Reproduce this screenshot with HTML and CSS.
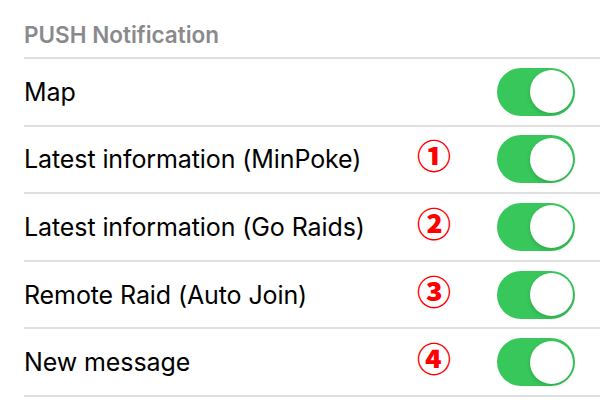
FILE: index.html
```html
<!DOCTYPE html>
<html>
<head>
<meta charset="utf-8">
<link rel="stylesheet" href="styles.css">
</head>
<body>
<div class="section-header">PUSH Notification</div>
<ul class="list">
  <li class="row"><span class="label">Map</span><span class="toggle"><span class="knob"></span></span></li>
  <li class="row"><span class="label">Latest information (MinPoke)</span><span class="badge">①</span><span class="toggle"><span class="knob"></span></span></li>
  <li class="row"><span class="label">Latest information (Go Raids)</span><span class="badge">②</span><span class="toggle"><span class="knob"></span></span></li>
  <li class="row"><span class="label">Remote Raid (Auto Join)</span><span class="badge">③</span><span class="toggle"><span class="knob"></span></span></li>
  <li class="row"><span class="label">New message</span><span class="badge">④</span><span class="toggle"><span class="knob"></span></span></li>
</ul>
</body>
</html>
```
FILE: styles.css
```css
html, body {
  margin: 0;
  padding: 0;
  background: #ffffff;
}
body {
  font-family: Inter, "Liberation Sans", sans-serif;
  width: 600px;
  height: 419px;
  overflow: hidden;
}
.section-header {
  height: 57px;
  box-sizing: border-box;
  padding: 21px 0 0 24px;
  font-size: 22.5px;
  font-weight: 600;
  color: #8a8a8e;
  line-height: 28px;
}
.list {
  list-style: none;
  margin: 0 0 0 24px;
  padding: 0;
  border-top: 2px solid #e0e0e2;
}
.row {
  display: flex;
  align-items: center;
  height: 67.6px;
  box-sizing: border-box;
  border-bottom: 2px solid #e0e0e2;
  padding-right: 25px;
}
.label {
  flex: 1;
  font-size: 25px;
  color: #000;
  letter-spacing: -0.1px;
}
.badge {
  width: 30px;
  margin-right: 50px;
  text-align: center;
  color: #ff0000;
  font-family: "Noto Sans CJK JP", sans-serif;
  font-weight: 900;
  font-size: 34px;
  line-height: 1;
  position: relative;
  top: -4px;
}
.toggle {
  width: 78px;
  height: 48px;
  border-radius: 24px;
  background: #37c75a;
  display: flex;
  align-items: center;
  justify-content: flex-end;
  padding: 2px;
  box-sizing: border-box;
}
.knob {
  width: 43px;
  height: 43px;
  border-radius: 50%;
  background: #fff;
  box-shadow: 0 2px 4px rgba(0,0,0,0.15);
}
```
